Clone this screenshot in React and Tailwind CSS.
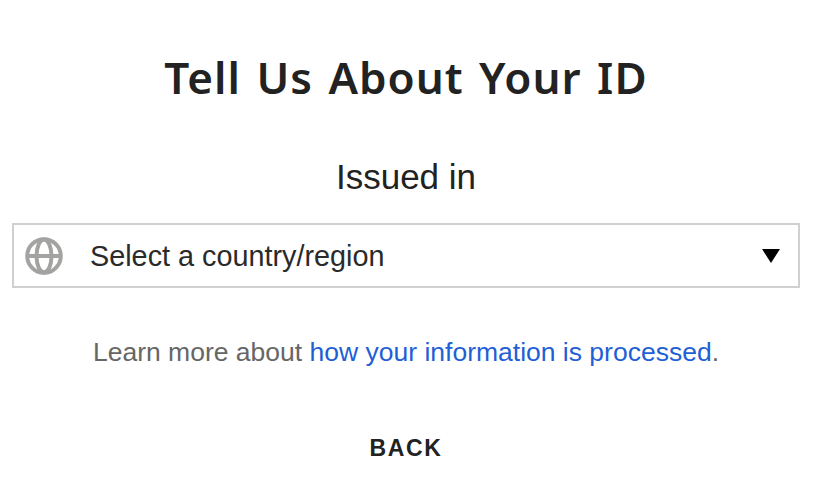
export default function App() {
  return (
    <div className="w-[837px] h-[501px] bg-white overflow-hidden pt-[48px] pl-3 flex flex-col items-start">
      <h1 className="w-[788px] text-center text-[44px] leading-[58px] font-semibold tracking-[1px] [word-spacing:3px] text-[#222] [font-family:'Noto_Sans',sans-serif]">Tell Us About Your ID</h1>
      <p className="w-[788px] mt-[51px] text-center text-[35px] leading-[40px] text-[#222] [font-family:'Liberation_Sans',sans-serif]">Issued in</p>
      <div className="w-[788px] mt-[26px] h-[65px] border-2 border-[#d0d0d0] flex items-center pl-[11px] pr-[18px]">
        <svg width="38" height="38" viewBox="0 0 38 38" fill="none" stroke="#a3a3a1" strokeWidth="4">
          <circle cx="19" cy="19" r="16.8" />
          <ellipse cx="19" cy="19" rx="7.5" ry="16.5" />
          <path d="M3 19H35" />
        </svg>
        <span className="ml-[27px] flex-1 pt-[2px] text-[28.8px] text-[#2a2a2a] [font-family:'Liberation_Sans',sans-serif]">Select a country/region</span>
        <div className="w-0 h-0 border-l-[9px] border-r-[9px] border-t-[14px] border-l-transparent border-r-transparent border-t-black" />
      </div>
      <p className="w-[788px] mt-[46px] text-center text-[26.5px] leading-[36px] text-[#666] [font-family:'Liberation_Sans',sans-serif]">Learn more about <a className="text-[#1f5fd6]">how your information is processed</a>.</p>
      <button className="w-[788px] mt-[61px] text-center text-[23px] font-bold tracking-[1.7px] text-[#222] [font-family:'Liberation_Sans',sans-serif]">BACK</button>
    </div>
  );
}
